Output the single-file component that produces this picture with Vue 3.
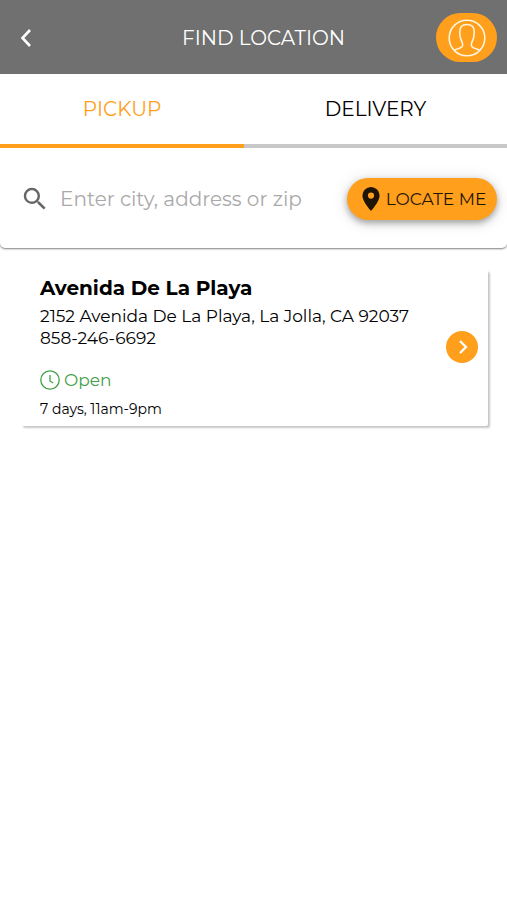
<script setup>
import { ref } from 'vue'

const tabs = ['PICKUP', 'DELIVERY']
const activeTab = ref('PICKUP')
const query = ref('')
const locations = [
  {
    name: 'Avenida De La Playa',
    address: '2152 Avenida De La Playa, La Jolla, CA 92037',
    phone: '858-246-6692',
    status: 'Open',
    hours: '7 days, 11am-9pm',
  },
]
</script>

<template>
  <div class="page">
    <header class="header">
      <button class="back" type="button" aria-label="Back">
        <svg width="12" height="20" viewBox="0 0 12 20" fill="none" stroke="currentColor" stroke-width="2.6">
          <path d="M10 2 2.500 10l7.500 8" />
        </svg>
      </button>
      <h1 class="title">FIND LOCATION</h1>
      <button class="profile" type="button" aria-label="Profile">
        <svg width="38" height="38" viewBox="0 0 38 38" fill="none" stroke="currentColor" stroke-width="1.6">
          <circle cx="19" cy="19" r="17.800" />
          <path d="M6 31.500C9 29.500 14.200 29.500 14.600 26.500C14.800 25 14.400 23.500 13.600 22C12.200 19.500 11.800 16 11.800 12.500C11.800 8 14.500 5.500 19 5.500S26.200 8 26.200 12.500C26.200 16 25.800 19.500 24.400 22C23.600 23.500 23.200 25 23.400 26.500C23.800 29.500 29 29.500 32 31.500" />
        </svg>
      </button>
    </header>

    <nav class="tabs">
      <button
        v-for="tab in tabs"
        :key="tab"
        type="button"
        class="tab"
        :class="{ active: tab === activeTab }"
        @click="activeTab = tab"
      >{{ tab }}</button>
    </nav>

    <form class="search" @submit.prevent>
      <label class="field">
        <svg class="magnifier" width="30" height="30" viewBox="0 0 24 24" fill="currentColor">
          <path d="M15.500 14h-.79l-.28-.27A6.470 6.470 0 0 0 16 9.500 6.500 6.500 0 1 0 9.500 16c1.610 0 3.090-.59 4.230-1.570l.27.28v.79l5 4.990L20.490 19l-4.990-5zm-6 0C7.010 14 5 11.990 5 9.500S7.010 5 9.500 5 14 7.010 14 9.500 11.990 14 9.500 14z" />
        </svg>
        <input v-model="query" class="input" type="text" aria-label="Enter city, address or zip" placeholder="Enter city, address or zip" />
      </label>
      <button class="locate" type="button">
        <svg width="18" height="24" viewBox="0 0 18 24" fill="currentColor">
          <path fill-rule="evenodd" d="M9 0a8.600 8.600 0 0 0-8.600 8.600C.4 15 9 24 9 24s8.600-9 8.600-15.400A8.600 8.600 0 0 0 9 0zm0 5.500a3.100 3.100 0 1 1 0 6.200 3.100 3.100 0 0 1 0-6.200z" />
        </svg>
        <span>LOCATE ME</span>
      </button>
    </form>

    <main class="list">
      <article v-for="place in locations" :key="place.name" class="card">
        <div class="details">
          <h2 class="name">{{ place.name }}</h2>
          <p class="line">{{ place.address }}</p>
          <p class="line">{{ place.phone }}</p>
          <p class="status">
            <svg width="20" height="20" viewBox="0 0 20 20" fill="none" stroke="currentColor" stroke-width="1.300">
              <circle cx="10" cy="10" r="9.200" />
              <path d="M10 5v6l3 2" />
            </svg>
            <span>{{ place.status }}</span>
          </p>
          <p class="hours">{{ place.hours }}</p>
        </div>
        <button class="go" type="button" :aria-label="`Choose ${place.name}`">
          <svg width="10" height="16" viewBox="0 0 10 16" fill="none" stroke="currentColor" stroke-width="2.300">
            <path d="m2 2 6 6-6 6" />
          </svg>
        </button>
      </article>
    </main>
  </div>
</template>

<style>
body {
  margin: 0;
  background: #fff;
}
</style>

<style scoped>
.page {
  min-height: 100vh;
  font-family: Montserrat, Inter, "Open Sans", sans-serif;
  color: #000;
}

button {
  margin: 0;
  padding: 0;
  border: 0;
  background: none;
  font: inherit;
  color: inherit;
  cursor: pointer;
}

svg {
  display: block;
  flex: none;
}

h1, h2, p {
  margin: 0;
}

.header {
  display: grid;
  grid-template-columns: 81px 1fr 61px;
  align-items: center;
  height: 74px;
  padding: 1px 10px 0;
  box-sizing: border-box;
  background: #707070;
  color: #fff;
}

.back {
  display: flex;
  align-items: center;
  height: 48px;
  padding: 0 10px;
}

.title {
  text-align: center;
  font-size: 20px;
  line-height: 24px;
  font-weight: 400;
}

.profile {
  display: flex;
  align-items: center;
  justify-content: center;
  height: 49px;
  border-radius: 25px;
  background: #ff9f1c;
  color: #fff4dc;
}

.tabs {
  display: grid;
  grid-template-columns: 13fr 14fr;
}

.tab {
  height: 74px;
  border-bottom: 4px solid #c8c8c8;
  font-size: 20px;
  line-height: 24px;
}

.tab.active {
  color: #ff9f1c;
  border-bottom-color: #ff9f1c;
}

.search {
  display: flex;
  align-items: center;
  gap: 12px;
  height: 100px;
  padding: 1px 10px 0 20px;
  box-sizing: border-box;
  border-radius: 0 0 5px 5px;
  box-shadow: 0 1px 2px rgba(0, 0, 0, 0.5);
}

.field {
  display: flex;
  flex: 1;
  align-items: center;
  gap: 10px;
  min-width: 0;
}

.magnifier {
  color: #666;
}

.input {
  flex: 1;
  min-width: 0;
  padding: 0;
  border: 0;
  outline: 0;
  background: none;
  font: inherit;
  font-size: 20px;
  line-height: 24px;
}

.input::placeholder {
  color: #a9a9a9;
  opacity: 1;
}

.locate {
  display: flex;
  align-items: center;
  justify-content: center;
  gap: 6px;
  width: 150px;
  height: 42px;
  padding-left: 4px;
  border-radius: 21px;
  background: #ff9f1c;
  color: #1f1505;
  font-size: 17px;
  line-height: 24px;
  white-space: nowrap;
  box-shadow: 0 3px 6px rgba(0, 0, 0, 0.3), 0 2px 16px rgba(0, 0, 0, 0.15);
}

.list {
  padding: 22px 19px 24px 21px;
}

.card {
  display: flex;
  align-items: center;
  gap: 12px;
  padding: 6px 10px 8px 19px;
  border-radius: 2px;
  box-shadow: 2px 2px 2px rgba(0, 0, 0, 0.22);
}

.details {
  flex: 1;
  min-width: 0;
}

.name {
  margin-bottom: 5px;
  font-size: 20px;
  line-height: 24px;
  font-weight: 700;
}

.line {
  font-size: 17px;
  line-height: 22px;
}

.status {
  display: flex;
  align-items: center;
  gap: 4px;
  margin: 20px 0 9px;
  color: #43a047;
  font-size: 17px;
  line-height: 22px;
}

.hours {
  font-size: 14px;
  line-height: 18px;
}

.go {
  display: flex;
  flex: none;
  align-items: center;
  justify-content: center;
  width: 32px;
  height: 32px;
  padding-left: 2px;
  border-radius: 50%;
  background: #ff9f1c;
  color: #fff;
}
</style>
